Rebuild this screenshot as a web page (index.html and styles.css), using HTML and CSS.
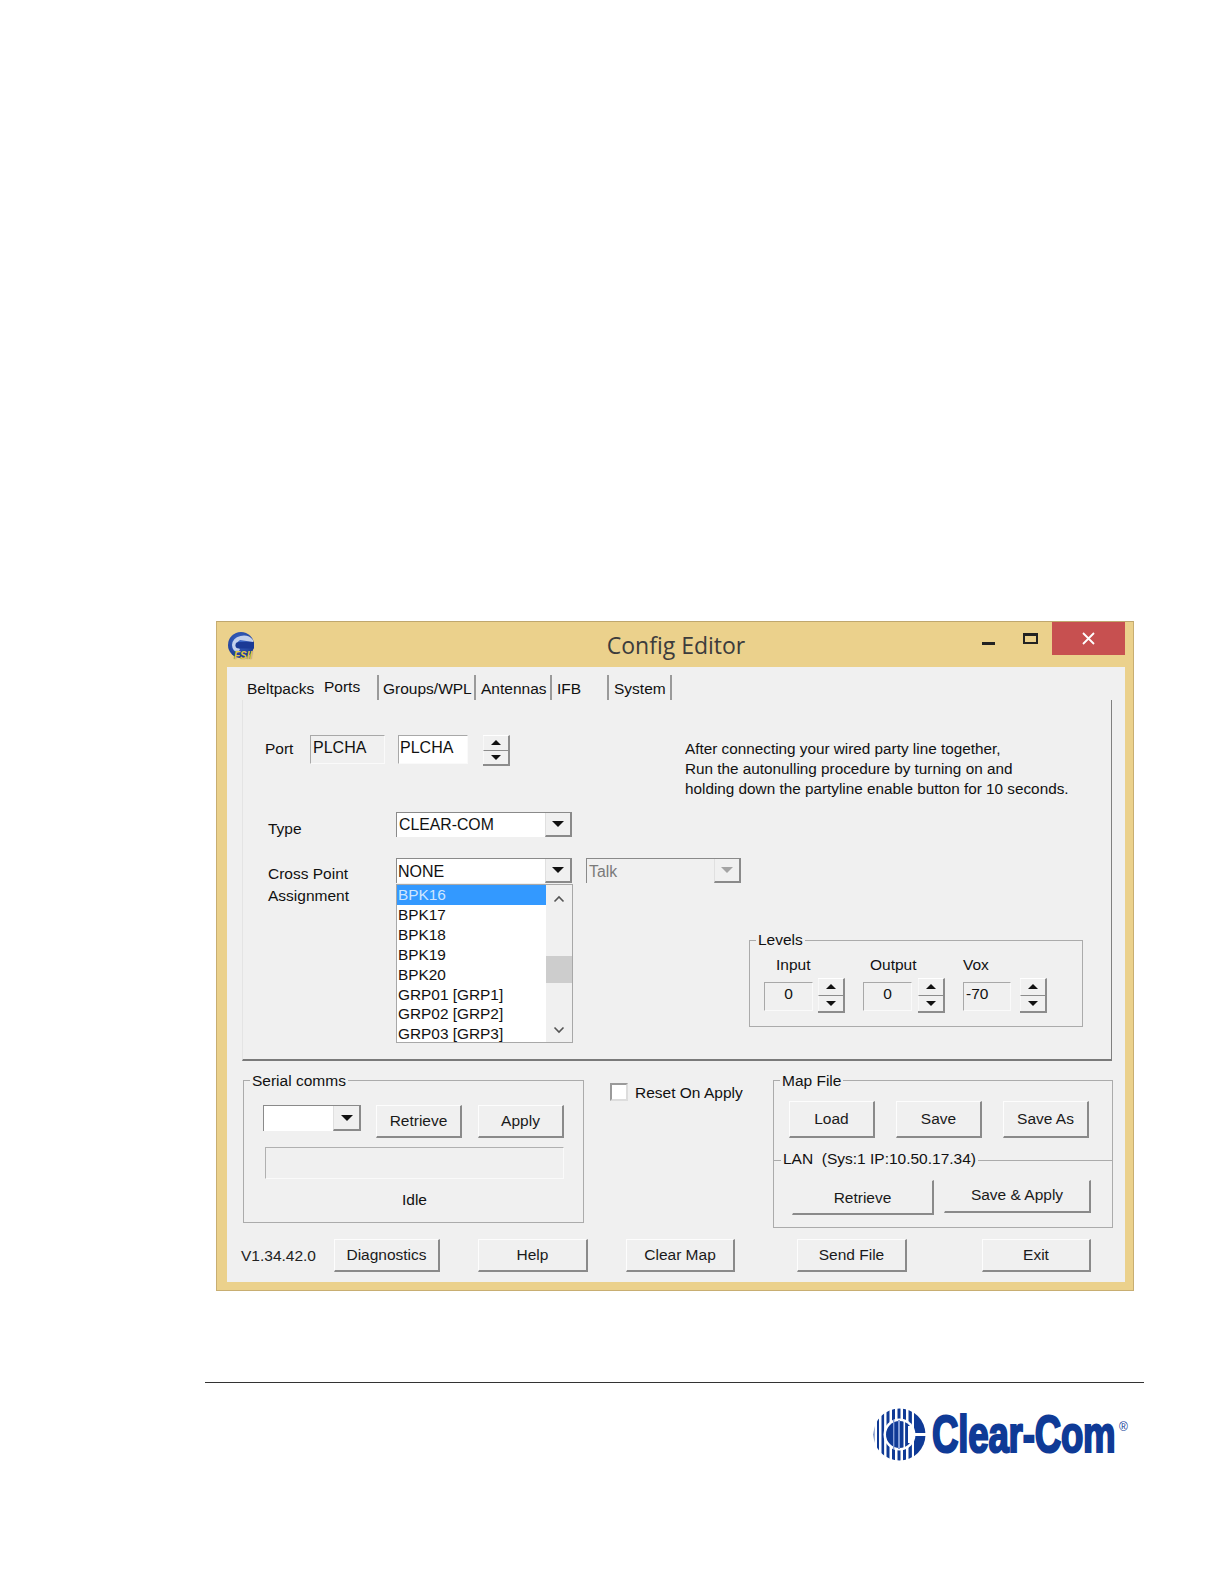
FILE: index.html
```html
<!DOCTYPE html>
<html lang="en">
<head>
<meta charset="utf-8">
<title>Config Editor</title>
<link rel="stylesheet" href="styles.css">
</head>
<body>
<main class="page">
  <section class="window">
    <header class="titlebar">
      <div class="app-icon">
        <svg width="27" height="27" viewBox="0 0 27 27">
          <defs>
            <radialGradient id="ball" cx=".45" cy=".35" r=".75">
              <stop offset="0" stop-color="#3d69c8"/>
              <stop offset="1" stop-color="#16328a"/>
            </radialGradient>
          </defs>
          <circle cx="13" cy="13" r="13" fill="url(#ball)"/>
          <path d="M25 8 A11.5 10 0 0 0 4 13 A9 9 0 0 0 10 21 L12 17 A5 5 0 0 1 12 8 L25 10 Z" fill="#c3d0ec"/>
          <path d="M11 10 H26 V16.5 H11 A3.5 3.2 0 0 1 11 10 Z" fill="#1b3a96"/>
        </svg>
        <span class="app-icon-text">FSII</span>
      </div>
      <h1 class="title">Config Editor</h1>
      <div class="win-controls">
        <span class="win-min"></span>
        <span class="win-max"></span>
        <span class="win-close">
          <svg width="13" height="13" viewBox="0 0 13 13"><path d="M1 1 L12 12 M12 1 L1 12" stroke="#fff" stroke-width="1.8"/></svg>
        </span>
      </div>
    </header>
    <div class="client">
      <nav class="tabs">
        <span class="tab tab-belt">Beltpacks</span>
        <span class="tab tab-ports">Ports</span>
        <span class="tab tab-groups">Groups/WPL</span>
        <span class="tab tab-ant">Antennas</span>
        <span class="tab tab-ifb">IFB</span>
        <span class="tab tab-sys">System</span>
      </nav>
      <div class="panel">
        <div class="row-port">
          <span class="label-port">Port</span>
          <span class="field field-port-a">PLCHA</span>
          <span class="field field-white field-port-b">PLCHA</span>
          <span class="spin spin-port"><i class="up"></i><i class="down"></i></span>
          <p class="note">After connecting your wired party line together,<br>Run the autonulling procedure by turning on and<br>holding down the partyline enable button for 10 seconds.</p>
        </div>
        <div class="row-type">
          <span class="label-side label-type">Type</span>
          <span class="combo combo-main"><span class="combo-text">CLEAR-COM</span><span class="combo-btn"><i class="down"></i></span></span>
        </div>
        <div class="row-cross">
          <span class="label-side label-cross">Cross Point<br>Assignment</span>
          <div class="cross-col">
            <span class="combo combo-main combo-none"><span class="combo-text">NONE</span><span class="combo-btn"><i class="down"></i></span></span>
            <div class="listbox">
              <ul class="list-items">
                <li class="selected">BPK16</li>
                <li>BPK17</li>
                <li>BPK18</li>
                <li>BPK19</li>
                <li>BPK20</li>
                <li>GRP01 [GRP1]</li>
                <li>GRP02 [GRP2]</li>
                <li>GRP03 [GRP3]</li>
              </ul>
              <div class="scrollbar">
                <svg class="chev" width="12" height="8" viewBox="0 0 12 8"><path d="M1.5 6.5 L6 2 L10.5 6.5" fill="none" stroke="#555" stroke-width="1.6"/></svg>
                <span class="thumb"></span>
                <svg class="chev chev-down" width="12" height="8" viewBox="0 0 12 8"><path d="M1.5 1.5 L6 6 L10.5 1.5" fill="none" stroke="#555" stroke-width="1.6"/></svg>
              </div>
            </div>
          </div>
          <div class="talk-col">
            <span class="combo combo-talk"><span class="combo-text">Talk</span><span class="combo-btn combo-btn-off"><i class="down"></i></span></span>
            <div class="group levels">
              <span class="legend legend-levels">Levels</span>
              <div class="level level-input">
                <span class="level-label">Input</span>
                <div class="level-ctl"><span class="field field-level">0</span><span class="spin"><i class="up"></i><i class="down"></i></span></div>
              </div>
              <div class="level level-output">
                <span class="level-label">Output</span>
                <div class="level-ctl"><span class="field field-level">0</span><span class="spin spin-output"><i class="up"></i><i class="down"></i></span></div>
              </div>
              <div class="level level-vox">
                <span class="level-label level-label-vox">Vox</span>
                <div class="level-ctl"><span class="field field-level field-left">-70</span><span class="spin spin-vox"><i class="up"></i><i class="down"></i></span></div>
              </div>
            </div>
          </div>
        </div>
      </div>
      <div class="lower">
        <div class="group serial">
          <span class="legend">Serial comms</span>
          <div class="serial-row">
            <span class="combo combo-serial"><span class="combo-text"></span><span class="combo-btn"><i class="down"></i></span></span>
            <span class="btn btn-serial btn-first">Retrieve</span>
            <span class="btn btn-serial">Apply</span>
          </div>
          <div class="status-box"></div>
          <div class="status-text">Idle</div>
        </div>
        <label class="reset"><span class="checkbox"></span><span class="reset-text">Reset On Apply</span></label>
        <div class="group mapfile">
          <span class="legend">Map File</span>
          <div class="map-row">
            <span class="btn btn-map">Load</span>
            <span class="btn btn-map">Save</span>
            <span class="btn btn-map">Save As</span>
          </div>
          <div class="lan-line"><span class="legend-lan">LAN&nbsp; (Sys:1 IP:10.50.17.34)</span></div>
          <div class="lan-row">
            <span class="btn btn-lan-a">Retrieve</span>
            <span class="btn btn-lan-b">Save &amp; Apply</span>
          </div>
        </div>
      </div>
      <footer class="bottom">
        <span class="version">V1.34.42.0</span>
        <span class="btn btn-foot btn-diag">Diagnostics</span>
        <span class="btn btn-foot btn-help">Help</span>
        <span class="btn btn-foot btn-clear">Clear Map</span>
        <span class="btn btn-foot btn-send">Send File</span>
        <span class="btn btn-foot btn-exit">Exit</span>
      </footer>
    </div>
  </section>
  <div class="rule"></div>
  <div class="logo">
    <svg class="logo-mark" width="53" height="53" viewBox="0 0 53 53">
      <defs>
        <clipPath id="disc"><circle cx="26.5" cy="26.5" r="26"/></clipPath>
      </defs>
      <g clip-path="url(#disc)" fill="#0f3a96">
        <rect x="0" y="0" width="1.4" height="53"/>
        <rect x="4" y="0" width="2" height="53"/>
        <rect x="8.5" y="0" width="2.6" height="53"/>
        <rect x="13.5" y="0" width="3" height="53"/>
        <rect x="19" y="0" width="3" height="53"/>
        <rect x="24.5" y="0" width="3" height="53"/>
        <rect x="30" y="0" width="3" height="53"/>
        <rect x="35.5" y="0" width="3.4" height="53"/>
        <rect x="41" y="0" width="12" height="53"/>
      </g>
      <circle cx="26.5" cy="26.5" r="16" fill="#fff"/>
      <circle cx="26.5" cy="26.5" r="13.5" fill="#0f3a96"/>
      <rect x="25" y="12" width="2" height="29" fill="#7f9bd6"/>
      <rect x="30.5" y="12" width="1.6" height="29" fill="#fff"/>
      <rect x="20" y="12" width="1.4" height="29" fill="#7f9bd6"/>
      <rect x="36" y="25" width="17" height="3" fill="#fff"/>
      <rect x="35" y="18" width="6" height="17" fill="#fff"/>
    </svg>
    <div class="logo-word"><span class="logo-text">Clear-Com</span></div>
    <span class="logo-reg">®</span>
  </div>
</main>
</body>
</html>
```

FILE: styles.css
```css
* { box-sizing: border-box; }
html, body { margin: 0; padding: 0; background: #fff; }
body { font-family: "Liberation Sans", Arial, sans-serif; font-size: 15.5px; color: #111; }
.page { width: 1224px; height: 1584px; padding: 621px 0 0 216px; overflow: hidden; }

/* window */
.window { width: 918px; height: 670px; background: #ebd18c; border: 1px solid #c8ae72; border-top-color: #bfa76e; display: flex; flex-direction: column; padding: 0 8px 8px 10px; }
.titlebar { height: 45px; flex: none; position: relative; display: flex; justify-content: center; }
.app-icon { position: absolute; left: 1px; top: 10px; width: 27px; height: 27px; }
.app-icon svg { display: block; }
.app-icon-text { position: absolute; left: 6px; bottom: -2px; font: italic bold 10px/10px "Liberation Sans", sans-serif; color: #e6c93c; text-shadow: 0 0 1px #1d3f9c; white-space: nowrap; }
.title { margin: 7px 0 0 0; font: 400 23px/33px "Open Sans", sans-serif; color: #3c3c3c; }
.win-controls { position: absolute; right: 0; top: 0; height: 33px; display: flex; align-items: flex-start; }
.win-min { width: 13px; height: 3px; background: #222; margin-top: 20px; margin-right: 28px; }
.win-max { width: 15px; height: 11px; border: 2px solid #222; border-top-width: 3px; margin-top: 11px; margin-right: 14px; }
.win-close { width: 73px; height: 33px; background: #c75050; display: flex; align-items: center; justify-content: center; }

.client { flex: 1; background: #f0f0f0; display: flex; flex-direction: column; padding: 8px 12px 0 15px; min-height: 0; }

/* tabs */
.tabs { height: 25px; display: flex; flex: none; }
.tab { display: block; height: 25px; line-height: 28px; padding-left: 4px; border-right: 2px solid #9a9a9a; color: #111; }
.tab-belt { width: 73px; padding-left: 5px; border: 0; }
.tab-ports { width: 64px; padding-left: 9px; line-height: 24px; }
.tab-groups { width: 97px; }
.tab-ant { width: 76px; padding-left: 5px; }
.tab-ifb { width: 57px; padding-left: 5px; }
.tab-sys { width: 63px; padding-left: 5px; }

/* panel */
.panel { width: 870px; height: 361px; flex: none; border-left: 1px solid #e4e4e4; border-right: 1px solid #808080; border-bottom: 2px solid #7a7a7a; padding-top: 35px; }
.row-port { height: 77px; display: flex; align-items: flex-start; position: relative; padding-left: 22px; }
.label-port { width: 45px; margin-top: 5px; }
.field { display: block; height: 29px; line-height: 24px; padding-left: 2px; background: #f0f0f0; border-top: 1px solid #a8a8a8; border-left: 1px solid #a8a8a8; border-right: 1px solid #fafafa; border-bottom: 1px solid #fafafa; }
.field-port-a { width: 75px; font-size: 16px; }
.field-white { background: #fff; }
.field-port-b { width: 70px; margin-left: 13px; padding-left: 1px; font-size: 16px; }
.spin { display: flex; flex-direction: column; width: 27px; height: 35px; border-top: 1px solid #fff; border-right: 2px solid #8c8c8c; border-bottom: 2px solid #8c8c8c; }
.spin .up, .spin .down { flex: 1; display: flex; align-items: center; justify-content: center; border-left: 1px solid #f8f8f8; }
.spin .up { border-bottom: 1px solid #8c8c8c; }
.up::before { content: ""; border: 5px solid transparent; border-top: 0; border-bottom: 5px solid #111; }
.down::before { content: ""; border: 5px solid transparent; border-bottom: 0; border-top: 5px solid #111; }
.spin-port { margin-left: 15px; height: 31px; }
.note { margin: 4px 0 0 175px; line-height: 20px; white-space: nowrap; font-size: 15.3px; }

.row-type { height: 46px; display: flex; align-items: flex-start; padding-left: 25px; }
.label-side { display: block; width: 128px; line-height: 22px; }
.label-type { margin-top: 6px; }
.label-cross { margin-top: 5px; }
.combo { display: flex; height: 25px; background: #fff; border-top: 1px solid #8a8a8a; border-left: 1px solid #8a8a8a; }
.combo-main { width: 176px; }
.combo-text { flex: 1; line-height: 23px; padding-left: 2px; font-size: 15.8px; }
.combo-none .combo-text { padding-left: 1px; font-size: 16px; line-height: 25px; }
.combo-btn { width: 27px; background: #f0f0f0; border-right: 2px solid #8a8a8a; border-bottom: 2px solid #8a8a8a; border-left: 1px solid #e0e0e0; display: flex; align-items: center; justify-content: center; }
.combo-btn .down::before { display: block; border-width: 6px; border-bottom: 0; }
.combo-talk { width: 155px; background: #f0f0f0; border-right: 0; color: #7a7a7a; border-bottom: 0; }
.combo-talk .combo-text { line-height: 25px; }
.combo-btn-off .down::before { border-top-color: #a4a4a4; }

.row-cross { display: flex; align-items: flex-start; padding-left: 25px; }
.cross-col { width: 177px; flex: none; }
.combo-none { height: 25px; }
.listbox { margin-top: 1px; width: 177px; height: 159px; border: 1px solid #a8a8a8; background: #fff; display: flex; }
.list-items { list-style: none; margin: 0; padding: 0; flex: 1; font-size: 15.4px; }
.list-items li { height: 19.8px; line-height: 19px; padding-left: 1px; white-space: nowrap; }
.list-items li.selected { background: #3399ff; color: #cfe6ff; height: 20.4px; line-height: 20px; }
.scrollbar { width: 26px; background: #f0f0f0; display: flex; flex-direction: column; align-items: center; position: relative; }
.chev { margin-top: 10px; flex: none; }
.thumb { position: absolute; left: 0; top: 71px; width: 26px; height: 27px; background: #cdcdcd; }
.chev-down { margin-top: auto; margin-bottom: 8px; }

.talk-col { margin-left: 13px; }
.levels { margin: 57px 0 0 163px; width: 334px; height: 87px; display: flex; }

/* group boxes */
.group { position: relative; border: 1px solid #ababab; }
.legend { position: absolute; top: -9px; left: 6px; padding: 0 2px; background: #f0f0f0; line-height: 18px; white-space: nowrap; }
.legend-levels { top: -10px; left: 6px; }

.level { display: flex; flex-direction: column; }
.level-label { line-height: 18px; margin-top: 15px; margin-left: 12px; }
.level-input { margin-left: 14px; width: 99px; }
.level-label-vox { margin-left: 0; }
.level-output { width: 100px; }
.level-output .level-label { margin-left: 7px; }
.level-vox { width: 84px; }
.level-ctl { display: flex; align-items: flex-start; margin-top: 4px; }
.field-level { width: 49px; text-align: center; line-height: 22px; margin-top: 4px; padding: 0; }
.field-left { text-align: left; padding-left: 2px; }
.level-ctl .spin { margin-left: 5px; }
.level-ctl .spin-output { margin-left: 6px; }
.level-ctl .spin-vox { margin-left: 9px; }

/* lower */
.lower { display: flex; align-items: flex-start; margin-top: 19px; padding-left: 1px; flex: none; }
.serial { width: 341px; height: 143px; padding: 24px 0 0 19px; }
.serial-row { display: flex; align-items: flex-start; }
.combo-serial { width: 98px; height: 26px; }
.combo-serial .combo-btn { width: 28px; }
.btn { display: flex; align-items: center; justify-content: center; background: #f0f0f0; border: 1px solid; border-color: #fdfdfd #8a8a8a #8a8a8a #fdfdfd; border-right-width: 2px; border-bottom-width: 2px; white-space: nowrap; color: #1a1a1a; }
.btn-serial { width: 86px; height: 33px; margin-left: 16px; }
.btn-first { margin-left: 15px; }
.status-box { width: 299px; height: 32px; margin: 9px 0 0 2px; border: 1px solid; border-color: #b0b0b0 #fafafa #fafafa #b0b0b0; }
.status-text { width: 341px; margin-left: -19px; text-align: center; margin-top: 12px; line-height: 18px; }

.reset { display: flex; align-items: flex-start; gap: 7px; margin: 3px 0 0 26px; height: 20px; width: 163px; white-space: nowrap; }
.reset-text { margin-top: 1px; line-height: 18px; }
.checkbox { width: 18px; height: 18px; background: #fff; border: 2px solid #9a9a9a; border-right-color: #ddd; border-bottom-color: #ddd; flex: none; }

.mapfile { width: 340px; height: 148px; }
.map-row { display: flex; gap: 21px; padding: 20px 0 0 15px; }
.btn-map { width: 86px; height: 37px; }
.lan-line { height: 1px; background: #ababab; margin-top: 22px; position: relative; }
.legend-lan { position: absolute; left: 7px; top: -10px; padding: 0 2px; background: #f0f0f0; line-height: 18px; white-space: nowrap; }
.lan-row { display: flex; align-items: flex-start; padding: 19px 0 0 18px; gap: 10px; }
.btn-lan-a { width: 142px; height: 35px; padding-top: 2px; border-color: transparent #8a8a8a #8a8a8a transparent; }
.btn-lan-b { width: 147px; height: 33px; border-color: transparent #8a8a8a #8a8a8a transparent; padding-bottom: 3px; }

/* bottom */
.bottom { display: flex; align-items: flex-start; margin-top: 11px; flex: none; }
.version { margin: 8px 0 0 -1px; line-height: 18px; width: 93px; font-size: 15.5px; color: #222; }
.btn-foot { width: 107px; height: 33px; }
.btn-diag { width: 106px; }
.btn-help { margin-left: 38px; width: 110px; }
.btn-clear { margin-left: 38px; width: 109px; }
.btn-send { margin-left: 62px; width: 110px; }
.btn-exit { margin-left: 75px; width: 109px; }

/* footer page */
.rule { width: 939px; height: 1px; background: #333; margin: 91px 0 0 -11px; }
.logo { margin: 25px 0 0 657px; height: 60px; display: flex; align-items: flex-start; position: relative; }
.logo-mark { flex: none; }
.logo-word { margin: 1px 0 0 6px; width: 186px; height: 56px; flex: none; white-space: nowrap; }
.logo-text { display: inline-block; font: 700 52px/50px "Liberation Sans", sans-serif; color: #0f3a96; -webkit-text-stroke: 2.2px #0f3a96; transform: scaleX(.705); transform-origin: left top; letter-spacing: -.3px; }
.logo-reg { position: absolute; left: 246px; top: 13px; font: 400 12px/12px "Liberation Sans", sans-serif; color: #0f3a96; }
```
